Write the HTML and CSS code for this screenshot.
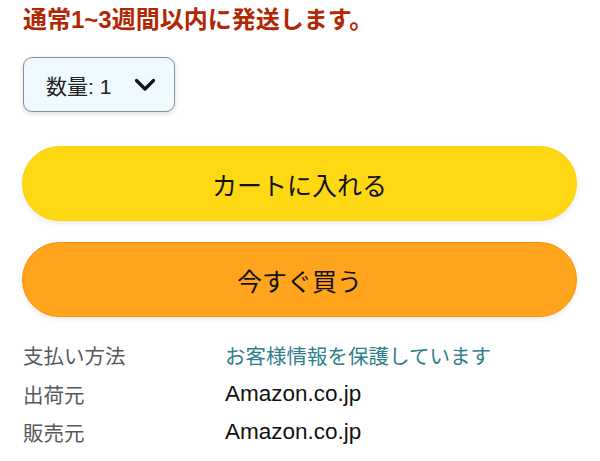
FILE: index.html
```html
<!DOCTYPE html>
<html lang="ja">
<head>
  <meta charset="UTF-8" />
  <title>購入</title>
  <link rel="stylesheet" href="styles.css">
</head>
<body>

  <div class="buybox">
    <p class="shipping">通常1~3週間以内に発送します。</p>

    <div class="qty" role="button" tabindex="0">
      <span class="qty-label">数量: 1</span>
      <svg class="chevron" width="22" height="16" viewBox="0 0 22 16" aria-hidden="true">
        <path d="M2.5 3.5 L11 12 L19.5 3.5" fill="none" stroke="#111" stroke-width="3.2" stroke-linecap="round" stroke-linejoin="round"/>
      </svg>
    </div>

    <div class="actions">
      <button class="btn cart">カートに入れる</button>
      <button class="btn buy-now">今すぐ買う</button>
    </div>

    <dl class="details">
      <div class="row">
        <dt>支払い方法</dt>
        <dd class="link">お客様情報を保護しています</dd>
      </div>
      <div class="row">
        <dt>出荷元</dt>
        <dd class="latin">Amazon.co.jp</dd>
      </div>
      <div class="row">
        <dt>販売元</dt>
        <dd class="latin">Amazon.co.jp</dd>
      </div>
    </dl>
  </div>

</body>
</html>
```

FILE: styles.css
```css
/* Reset */
* {
  margin: 0; padding: 0; box-sizing: border-box;
}
html, body {
  background: #fff;
  font-family: "Liberation Sans", "Noto Sans CJK JP", sans-serif;
  color: #111;
}

.buybox {
  padding: 5px 23px 0 22px;
}

/* Aviso de envío */
.shipping {
  font-size: 24px;
  line-height: 30px;
  font-weight: 700;
  color: #b12704;
  padding-left: 1px;
}

/* Selector de cantidad */
.qty {
  display: flex;
  align-items: center;
  gap: 23px;
  width: 152px;
  height: 55px;
  margin: 22px 0 0 1px;
  padding: 0 0 0 22px;
  background: #eefafd;
  border: 1px solid #8d9090;
  border-radius: 9px;
  box-shadow: 0 2px 5px rgba(15, 17, 17, 0.15);
}
.qty-label {
  font-size: 21px;
  color: #222;
}
.chevron {
  margin-top: 1px;
}

/* Botones */
.actions {
  display: flex;
  flex-direction: column;
  gap: 21px;
  margin-top: 34px;
}
.btn {
  height: 75px;
  border: none;
  border-radius: 38px;
  font-family: inherit;
  font-size: 25px;
  color: #111;
  box-shadow: 0 2px 5px rgba(213, 217, 217, 0.6);
}
.cart {
  background: #ffd814;
  border: 1px solid #fcd200;
}
.buy-now {
  background: #ffa41c;
  border: 1px solid #ff8f00;
}

/* Detalles */
.details {
  margin-top: 19px;
  padding-left: 1px;
}
.row {
  display: flex;
  height: 38.5px;
  align-items: center;
  font-size: 20.5px;
}
.row dt {
  width: 202px;
  color: #565959;
}
.row dd {
  color: #111;
}
.row dd.latin {
  font-size: 22.5px;
}
.row dd.link {
  color: #2f7f8c;
}
```
